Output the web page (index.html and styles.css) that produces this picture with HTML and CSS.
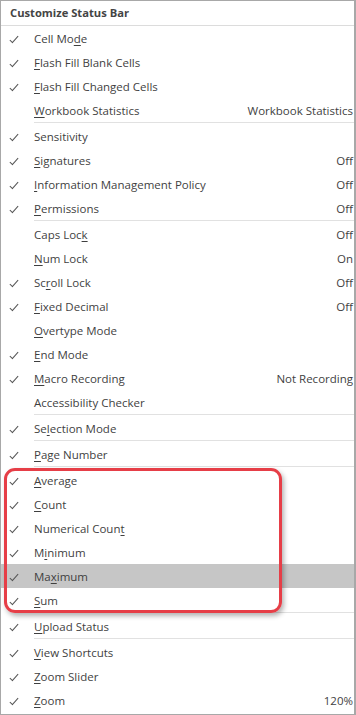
FILE: index.html
```html
<!DOCTYPE html>
<html lang="en">
<head>
    <meta charset="UTF-8">
    <title>Customize Status Bar</title>
    <link rel="stylesheet" href="styles.css">
</head>
<body>
    <div class="menu">
        <div class="menu-title">Customize Status Bar</div>

        <ul class="group">
            <li class="item checked"><span class="label">Cell Mo<u>d</u>e</span></li>
            <li class="item checked"><span class="label"><u>F</u>lash Fill Blank Cells</span></li>
            <li class="item checked"><span class="label"><u>F</u>lash Fill Changed Cells</span></li>
            <li class="item"><span class="label"><u>W</u>orkbook Statistics</span><span class="value">Workbook Statistics</span></li>
        </ul>

        <ul class="group">
            <li class="item checked"><span class="label">Sensitivity</span></li>
            <li class="item checked"><span class="label"><u>S</u>ignatures</span><span class="value">Off</span></li>
            <li class="item checked"><span class="label"><u>I</u>nformation Management Policy</span><span class="value">Off</span></li>
            <li class="item checked"><span class="label"><u>P</u>ermissions</span><span class="value">Off</span></li>
        </ul>

        <ul class="group">
            <li class="item"><span class="label">Caps Loc<u>k</u></span><span class="value">Off</span></li>
            <li class="item"><span class="label"><u>N</u>um Lock</span><span class="value">On</span></li>
            <li class="item checked"><span class="label">Sc<u>r</u>oll Lock</span><span class="value">Off</span></li>
            <li class="item checked"><span class="label"><u>F</u>ixed Decimal</span><span class="value">Off</span></li>
            <li class="item"><span class="label"><u>O</u>vertype Mode</span></li>
            <li class="item checked"><span class="label"><u>E</u>nd Mode</span></li>
            <li class="item checked"><span class="label"><u>M</u>acro Recording</span><span class="value">Not Recording</span></li>
            <li class="item"><span class="label">Accessibility Checker</span></li>
        </ul>

        <ul class="group">
            <li class="item checked"><span class="label">Se<u>l</u>ection Mode</span></li>
        </ul>

        <ul class="group">
            <li class="item checked"><span class="label"><u>P</u>age Number</span></li>
        </ul>

        <ul class="group">
            <li class="item checked"><span class="label"><u>A</u>verage</span></li>
            <li class="item checked"><span class="label"><u>C</u>ount</span></li>
            <li class="item checked"><span class="label">Numerical Coun<u>t</u></span></li>
            <li class="item checked"><span class="label">M<u>i</u>nimum</span></li>
            <li class="item checked hover"><span class="label">Ma<u>x</u>imum</span></li>
            <li class="item checked"><span class="label"><u>S</u>um</span></li>
        </ul>

        <ul class="group">
            <li class="item checked"><span class="label"><u>U</u>pload Status</span></li>
        </ul>

        <ul class="group">
            <li class="item checked"><span class="label"><u>V</u>iew Shortcuts</span></li>
            <li class="item checked"><span class="label"><u>Z</u>oom Slider</span></li>
            <li class="item checked"><span class="label"><u>Z</u>oom</span><span class="value">120%</span></li>
        </ul>

        <div class="callout"></div>
    </div>
</body>
</html>
```

FILE: styles.css
```css
body {
    margin: 0;
    background: #fff;
    font-family: "Open Sans", "Noto Sans", sans-serif;
    font-size: 11.5px;
    color: #3f3f3f;
}

.menu {
    position: relative;
    width: 356px;
    height: 715px;
    box-sizing: border-box;
    border: 1px solid #a8a8a8;
    border-right: 2px solid #a8a8a8;
    background: #fff;
    overflow: hidden;
}

.menu-title {
    height: 24px;
    line-height: 24px;
    padding-left: 9px;
    font-size: 11.2px;
    font-weight: bold;
    color: #444;
    border-bottom: 1px solid #dcdcdc;
}

.group {
    list-style: none;
    margin: 0;
    padding: 0;
}

.group + .group {
    margin-left: 33px;
    border-top: 1px solid #e1e1e1;
    padding-top: 1px;
}

.group + .group .item {
    margin-left: -33px;
}

.item {
    position: relative;
    display: flex;
    align-items: center;
    height: 24px;
    padding-left: 33px;
    padding-right: 1px;
}

.item.checked::before {
    content: "";
    position: absolute; /* check mark in the gutter */
    left: 11px;
    top: 8px;
    width: 3px;
    height: 8px;
    border-right: 1.6px solid #555;
    border-bottom: 1.6px solid #555;
    transform: rotate(42deg);
}

.item.hover {
    background: #c6c6c6;
}

.label {
    flex: 1;
    white-space: nowrap;
}

.label u {
    text-underline-offset: 2px;
}

.value {
    white-space: nowrap;
}

/* red highlight box drawn over the list */
.callout {
    position: absolute;
    left: 3px;
    top: 467px;
    width: 272px;
    height: 139px;
    border: 3px solid #e63e47;
    border-radius: 11px;
    box-shadow: 2px 3px 5px rgba(0, 0, 0, 0.3);
}
```
